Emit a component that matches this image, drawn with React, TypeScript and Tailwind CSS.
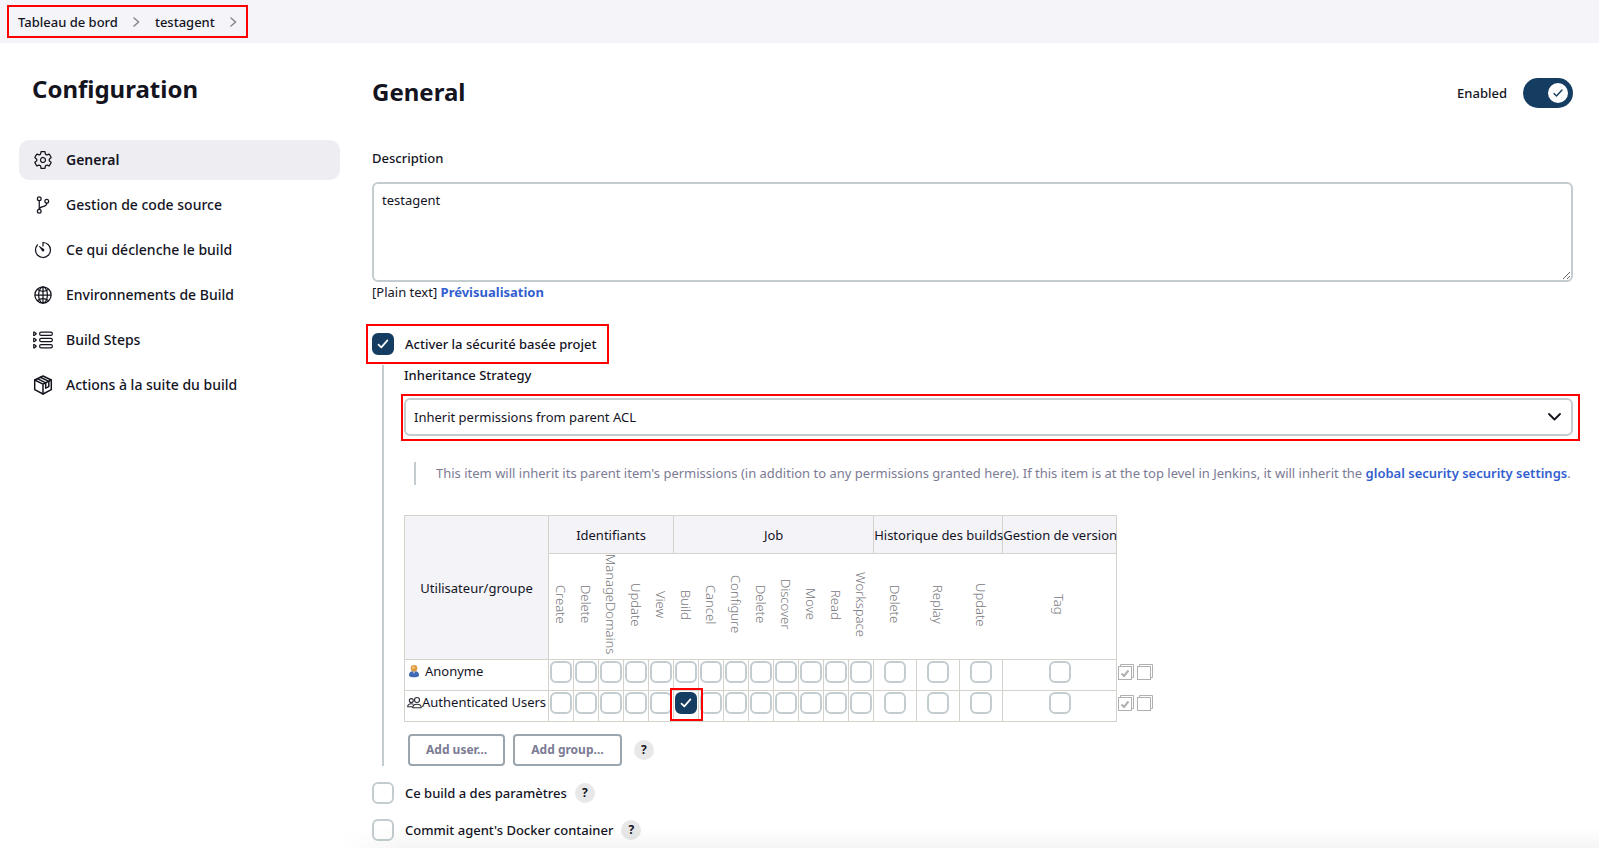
import React, { useId, useState } from "react";
import { IoSettingsOutline, IoGitBranchOutline, IoTimerOutline, IoGlobeOutline } from "react-icons/io5";

function StepsIcon() {
  return (
    <svg width="20" height="20" viewBox="0 0 20 20" fill="none" stroke="currentColor" strokeWidth="1.2" strokeLinejoin="round" aria-hidden="true">
      {[3.8, 10, 16.2].map((y) => (
        <g key={y}>
          <path d={`M0.7 ${y - 1.6}L1.500 ${y - 1.6}L3.300 ${y}L1.500 ${y + 1.6}L0.7 ${y + 1.6}Z`} />
          <rect x="6.6" y={y - 1.6} width="12.8" height="3.2" rx="1.6" />
        </g>
      ))}
    </svg>
  );
}

function PackageIcon() {
  return (
    <svg width="20" height="20" viewBox="0 0 20 20" fill="none" stroke="currentColor" strokeWidth="1.5" strokeLinejoin="round" strokeLinecap="round" aria-hidden="true">
      <path d="M10 1L18.3 5V14.6L10 19L1.7 14.6V5Z" />
      <path d="M1.7 5L10 9.2L18.3 5M10 9.2V19" />
      <path d="M7.300 2.300L15.800 6.400V11.600L12.700 13.200V7.800L4.400 3.700" />
    </svg>
  );
}

function PersonIcon() {
  return (
    <svg width="12" height="14" viewBox="0 0 12 14" aria-hidden="true">
      <path d="M1 11.2C1 8.2 2.6 7 6 7s5 1.200 5 4.200C11 12.600 9 13.200 6 13.200S1 12.600 1 11.200Z" fill="#3f68b5" />
      <path d="M4.300 7L6 10L7.700 7Z" fill="#a9bde0" />
      <circle cx="6" cy="4.300" r="3.300" fill="#dd9a3c" />
      <circle cx="5.400" cy="3.500" r="1.500" fill="#f3c27a" />
    </svg>
  );
}

function PeopleIcon() {
  return (
    <svg width="15" height="13" viewBox="0 0 15 13" fill="none" stroke="#2b2b36" strokeWidth="1.1" strokeLinecap="round" strokeLinejoin="round" aria-hidden="true">
      <circle cx="4.300" cy="4.600" r="2" />
      <path d="M5 10.700H.7c0-2 1.300-3 3.500-3 .8 0 1.400.1 1.900.4" />
      <circle cx="10" cy="4" r="2.500" />
      <path d="M5.700 11.800c0-2.400 1.700-3.500 4.300-3.500s4.300 1.100 4.300 3.500Z" />
    </svg>
  );
}

function BulkIcon({ checked }: { checked?: boolean }) {
  return (
    <svg width="16" height="16" viewBox="0 0 16 16" fill="none" stroke="#b0b0b0" aria-hidden="true">
      <path d="M2.500 2.500V.5H15.500V13.500H13.500" />
      <rect x=".5" y="2.500" width="13" height="13" />
      {checked && <path d="M3.500 9.500L6 12L10.500 6.500" strokeWidth="2" />}
    </svg>
  );
}

function Check({ id, label, on = false }: { id?: string; label?: string; on?: boolean }) {
  const [checked, setChecked] = useState(on);
  return (
    <span className="grid size-[22px] shrink-0">
      <input
        id={id}
        type="checkbox"
        aria-label={label}
        checked={checked}
        onChange={(e) => setChecked(e.target.checked)}
        className="col-start-1 row-start-1 size-[22px] appearance-none rounded-md border-2 border-[#c3cccf] bg-white checked:border-[#153d61] checked:bg-[#153d61]"
      />
      {checked && (
        <svg className="pointer-events-none col-start-1 row-start-1 m-auto" width="12" height="10" viewBox="0 0 12 10" fill="none" stroke="#fff" strokeWidth="1.700" strokeLinecap="round" strokeLinejoin="round" aria-hidden="true">
          <path d="M1.500 5.600L4.300 8.400L10.400 1.400" />
        </svg>
      )}
    </span>
  );
}

function Help({ topic }: { topic: string }) {
  return (
    <button type="button" aria-label={`Aide : ${topic}`} className="size-5 rounded-full bg-[#e8e8e9] text-xs leading-5 font-bold">
      ?
    </button>
  );
}

function Highlight({ className }: { className: string }) {
  return <span aria-hidden="true" className={`pointer-events-none absolute border-2 border-[#ff0000] ${className}`} />;
}

function CheckRow({ text, on, help, children }: { text: string; on?: boolean; help?: boolean; children?: React.ReactNode }) {
  const id = useId();
  return (
    <div className="flex items-center">
      <div className="relative flex items-center gap-[11px]">
        <Check id={id} on={on} />
        <label htmlFor={id} className="font-medium">{text}</label>
        {children}
      </div>
      {help && <span className="ml-2 flex"><Help topic={text} /></span>}
    </div>
  );
}

function Chevron() {
  return (
    <svg width="7" height="10" viewBox="0 0 7 10" fill="none" stroke="#85858f" strokeWidth="1.500" strokeLinecap="round" strokeLinejoin="round" aria-hidden="true">
      <path d="M1 1L5.600 5L1 9" />
    </svg>
  );
}

const nav = [
  { text: "General", icon: <IoSettingsOutline size={20} /> },
  { text: "Gestion de code source", icon: <IoGitBranchOutline size={20} /> },
  { text: "Ce qui déclenche le build", icon: <IoTimerOutline size={20} /> },
  { text: "Environnements de Build", icon: <IoGlobeOutline size={20} /> },
  { text: "Build Steps", icon: <StepsIcon /> },
  { text: "Actions à la suite du build", icon: <PackageIcon /> },
];

const groups = [
  { name: "Identifiants", col: "w-[25px]", perms: ["Create", "Delete", "ManageDomains", "Update", "View"] },
  { name: "Job", col: "w-[25px]", perms: ["Build", "Cancel", "Configure", "Delete", "Discover", "Move", "Read", "Workspace"] },
  { name: "Historique des builds", col: "w-[43px]", perms: ["Delete", "Replay", "Update"] },
  { name: "Gestion de version", col: "w-[114px]", perms: ["Tag"] },
];

const rows = [
  { name: "Anonyme", icon: <PersonIcon />, gap: "gap-[5px] pl-[3px]", granted: "" },
  { name: "Authenticated Users", icon: <PeopleIcon />, gap: "pl-[2px]", granted: "Job/Build" },
];

const cell = "border border-[#d3d3cc]";

function Matrix() {
  return (
    <table className="table-fixed w-[750px] border-collapse">
      <colgroup>
        <col className="w-[144px]" />
        {groups.flatMap((g) => g.perms.map((p) => <col key={g.name + p} className={g.col} />))}
        <col className="w-[37px]" />
      </colgroup>
      <thead>
        <tr className="h-[38px]">
          <th rowSpan={2} scope="col" className={`${cell} bg-[#f3f3f8] p-0 font-normal`}>Utilisateur/groupe</th>
          {groups.map((g) => (
            <th key={g.name} colSpan={g.perms.length} scope="colgroup" className={`${cell} bg-[#f3f3f8] p-0 font-normal whitespace-nowrap`}>
              {g.name}
            </th>
          ))}
        </tr>
        <tr className="h-[106px]">
          {groups.flatMap((g, gi) =>
            g.perms.map((p) => (
              <th
                key={g.name + p}
                scope="col"
                className={`border-y border-[#d3d3cc] p-0 pb-1 align-middle font-light text-[#77777c] ${gi === groups.length - 1 ? "border-r" : ""}`}
              >
                <div className="flex justify-center">
                  <span className="leading-4 [writing-mode:vertical-rl]">{p}</span>
                </div>
              </th>
            ))
          )}
        </tr>
      </thead>
      <tbody>
        {rows.map((r) => (
          <tr key={r.name} className="h-[31px]">
            <th scope="row" className={`${cell} p-0 align-top font-normal`}>
              <span className={`flex h-[22px] items-center whitespace-nowrap ${r.gap}`}>{r.icon}{r.name}</span>
            </th>
            {groups.flatMap((g) =>
              g.perms.map((p) => {
                const key = `${g.name}/${p}`;
                return (
                  <td key={key} className={`${cell} p-0 pt-px align-top`}>
                    <span className="relative flex justify-center">
                      <Check label={`${r.name} : ${key}`} on={r.granted === key} />
                      {r.granted === key && <Highlight className="-top-1 -right-[5px] -left-1 z-10 h-[33px]" />}
                    </span>
                  </td>
                );
              })
            )}
            <td className="p-0 pt-1 align-top">
              <span className="flex gap-[3px] pl-px">
                <button type="button" aria-label={`Tout sélectionner : ${r.name}`}><BulkIcon checked /></button>
                <button type="button" aria-label={`Tout désélectionner : ${r.name}`}><BulkIcon /></button>
              </span>
            </td>
          </tr>
        ))}
      </tbody>
    </table>
  );
}

export default function App() {
  const [enabled, setEnabled] = useState(true);
  return (
    <div className="relative h-screen overflow-hidden bg-white font-['Noto_Sans','Open_Sans',sans-serif] text-[13px] leading-5 text-[#14141f]">
      <nav aria-label="Fil d'Ariane" className="flex h-[43px] items-center bg-[#f4f4f9] pl-[7px]">
        <div className="relative flex h-[33px] items-center gap-[15px] px-[11px] font-medium">
          <a href="#tableau">Tableau de bord</a>
          <Chevron />
          <a href="#testagent">testagent</a>
          <Chevron />
          <Highlight className="inset-0" />
        </div>
      </nav>

      <div className="flex">
        <aside className="w-[340px] shrink-0 pl-[19px]">
          <h1 className="mt-[30px] pl-[13px] text-2xl leading-8 font-bold">Configuration</h1>
          <ul className="mt-[35px] flex flex-col gap-[5px] text-sm">
            {nav.map((n, i) => (
              <li key={n.text}>
                <a
                  href="#section"
                  className={`flex h-10 items-center gap-[13px] rounded-[10px] px-[14px] ${i === 0 ? "bg-[#eeeef2] font-semibold" : "font-medium"}`}
                >
                  {n.icon}
                  {n.text}
                </a>
              </li>
            ))}
          </ul>
        </aside>

        <main className="min-w-0 flex-1 pr-[26px] pl-8">
          <div className="mt-[33px] flex items-end justify-between">
            <h2 className="self-start text-2xl leading-8 font-bold">General</h2>
            <label className="mt-[2px] flex items-center gap-4 font-medium">
              Enabled
              <span className="grid">
                <input
                  type="checkbox"
                  role="switch"
                  checked={enabled}
                  onChange={(e) => setEnabled(e.target.checked)}
                  className="col-start-1 row-start-1 h-[30px] w-[50px] appearance-none rounded-full bg-[#9aa5ad] checked:bg-[#153d61]"
                />
                <span className={`pointer-events-none col-start-1 row-start-1 m-[5px] flex size-5 items-center justify-center rounded-full bg-white ${enabled ? "justify-self-end" : ""}`}>
                  <svg width="10" height="8" viewBox="0 0 10 8" fill="none" stroke="#153d61" strokeWidth="1.400" strokeLinecap="round" strokeLinejoin="round" aria-hidden="true">
                    <path d="M1 4.500L3.500 7L9 1" />
                  </svg>
                </span>
              </span>
            </label>
          </div>

          <label htmlFor="description" className="mt-10 block font-medium">Description</label>
          <textarea
            id="description"
            defaultValue="testagent"
            className="mt-[14px] block h-[100px] w-full resize rounded-md border-2 border-[#c3cccf] px-2 py-[6px]"
          />
          <p className="whitespace-pre">
            [Plain text] <a href="#apercu" className="font-bold text-[#335ecf]">Prévisualisation</a>
          </p>

          <div className="mt-[31px]">
            <CheckRow text="Activer la sécurité basée projet" on>
              <Highlight className="-inset-y-[9px] -right-[13px] -left-[6px]" />
            </CheckRow>
          </div>

          <div className="mt-[10px] ml-[10px] border-l-2 border-[#c3cccf] pl-5">
            <label htmlFor="strategy" className="block font-medium">Inheritance Strategy</label>
            <div className="relative mt-[13px] grid items-center">
              <select id="strategy" className="col-start-1 row-start-1 h-[38px] w-full appearance-none rounded-md border-2 border-[#c3cccf] bg-white px-2">
                <option>Inherit permissions from parent ACL</option>
              </select>
              <svg className="pointer-events-none col-start-1 row-start-1 mr-3 justify-self-end" width="13" height="8" viewBox="0 0 13 8" fill="none" stroke="#14141f" strokeWidth="1.800" strokeLinecap="round" strokeLinejoin="round" aria-hidden="true">
                <path d="M1 1L6.500 6.500L12 1" />
              </svg>
              <Highlight className="-top-1 -right-[7px] -bottom-[5px] -left-[3px]" />
            </div>

            <p className="mt-[26px] ml-[10px] border-l-2 border-[#c3cccf] pl-5 leading-[23px] text-[#7b7b94]">
              This item will inherit its parent item's permissions (in addition to any permissions granted here). If this item is at the top level in Jenkins, it will inherit the{" "}
              <a href="#securite" className="font-semibold text-[#335ecf]">global security security settings</a>.
            </p>

            <div className="mt-[30px]"><Matrix /></div>

            <div className="mt-3 ml-1 flex items-center gap-2">
              <button type="button" className="h-8 rounded border-2 border-[#9aa5ae] px-4 text-xs font-bold text-[#7b7b94]">Add user…</button>
              <button type="button" className="h-8 rounded border-2 border-[#9aa5ae] px-4 text-xs font-bold text-[#7b7b94]">Add group…</button>
              <span className="ml-1 flex"><Help topic="matrice" /></span>
            </div>
          </div>

          <div className="mt-4 flex flex-col gap-[15px]">
            <CheckRow text="Ce build a des paramètres" help />
            <CheckRow text="Commit agent's Docker container" help />
          </div>
        </main>
      </div>
      <div aria-hidden="true" className="pointer-events-none absolute right-0 bottom-0 left-[340px] h-5 bg-gradient-to-t from-black/4 to-transparent [mask-image:linear-gradient(to_right,transparent,black_60px)]" />
    </div>
  );
}
